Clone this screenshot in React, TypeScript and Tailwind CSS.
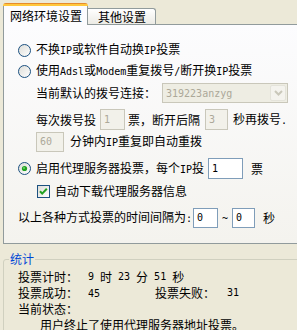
import React from "react";

// latin runs in half-width, like the old GB bitmap font
const M = ({ children }: { children: React.ReactNode }) => (
  <span className="font-['DejaVu_Sans_Mono',monospace] text-[10px]">{children}</span>
);

function Radio({ checked, id }: { checked?: boolean; id: string }) {
  return (
    <svg width="13" height="13" viewBox="0 0 13 13" className="shrink-0">
      <defs>
        <linearGradient id={id} x1="0" y1="0" x2="1" y2="1">
          <stop offset="0" stopColor="#DCDCD7" />
          <stop offset="1" stopColor="#FFFFFF" />
        </linearGradient>
      </defs>
      <circle cx="6.5" cy="6.5" r="6" fill={`url(#${id})`} stroke="#1C5180" strokeWidth="1" />
      {checked && <circle cx="6.5" cy="6.5" r="2.6" fill="#21A121" />}
      {checked && <circle cx="6" cy="6" r="1" fill="#6FD46B" />}
    </svg>
  );
}

function Checkbox() {
  return (
    <svg width="13" height="13" viewBox="0 0 13 13" className="shrink-0">
      <defs>
        <linearGradient id="cb" x1="0" y1="0" x2="1" y2="1">
          <stop offset="0" stopColor="#DCDCD7" />
          <stop offset="1" stopColor="#FFFFFF" />
        </linearGradient>
      </defs>
      <rect x="0.5" y="0.5" width="12" height="12" fill="url(#cb)" stroke="#1C5180" />
      <path d="M3 6.2 L5.2 8.6 L9.8 3.8" stroke="#21A121" strokeWidth="2" fill="none" />
    </svg>
  );
}

function Combo() {
  return (
    <div className="ml-[6px] flex h-[20px] w-[126px] shrink-0 items-center border border-[#C9C7BA] bg-[#EEEDE3]">
      <span className="pl-[3px] text-[#ACA899]">
        <M>319223anzyg</M>
      </span>
      <div className="ml-auto mr-px flex h-[16px] w-[16px] items-center justify-center rounded-[2px] border border-[#E4E3DA] bg-[#F4F3EE]">
        <svg width="9" height="6" viewBox="0 0 9 6">
          <path d="M1 1 L4.5 4.5 L8 1" stroke="#C9C7BA" strokeWidth="2" fill="none" />
        </svg>
      </div>
    </div>
  );
}

export default function App() {
  return (
    <div className="h-[330px] w-[297px] overflow-hidden whitespace-nowrap bg-[#ECE9D8] font-['Noto_Sans_CJK_SC',sans-serif] text-[12px] leading-[16px] text-black">
      {/* tabs */}
      <div className="flex h-[24px] items-end pl-[3px]">
        <div className="relative z-10 -mb-px flex h-[22px] w-[85px] flex-col overflow-hidden rounded-t-[3px]">
          <div className="h-px bg-[#E68B2C]" />
          <div className="h-[2px] bg-[#FFC73C]" />
          <div className="flex flex-1 items-center border-x border-[#919B9C] bg-[#FCFCFE] pl-[6px]">
            网络环境设置
          </div>
        </div>
        <div className="flex h-[16px] w-[68px] items-center rounded-tr-[3px] border-t border-r border-[#919B9C] bg-linear-to-b from-[#FFFFFF] to-[#ECEBE5] pl-[10px] pt-px">
          其他设置
        </div>
      </div>

      {/* panel */}
      <div className="ml-[3px] flex w-[296px] flex-col border border-[#919B9C] bg-linear-to-b from-[#FCFCFE] to-[#F4F3EE] pb-[15px] pl-[14px] pt-[15px]">
        <div className="flex h-[20px] items-center gap-[5px]">
          <Radio id="r1" />
          <span>
            不换<M>IP</M>或软件自动换<M>IP</M>投票
          </span>
        </div>
        <div className="mt-px flex h-[20px] items-center gap-[5px]">
          <Radio id="r2" />
          <span>
            使用<M>Adsl</M>或<M>Modem</M>重复拨号<M>/</M>断开换<M>IP</M>投票
          </span>
        </div>
        <div className="mt-[2px] flex h-[20px] items-center pl-[18px]">
          <span className="shrink-0">当前默认的拨号连接：</span>
          <Combo />
        </div>
        <div className="mt-[6px] flex h-[21px] items-center pl-[18px]">
          <span className="shrink-0">每次拨号投</span>
          <div className="ml-[4px] flex h-[21px] w-[25px] shrink-0 items-center border border-[#C9C7BA] bg-[#F2F1EA] pl-[3px] text-[#ACA899]">
            <M>1</M>
          </div>
          <span className="ml-[3px] shrink-0">票，断开后隔</span>
          <div className="ml-[5px] flex h-[21px] w-[23px] shrink-0 items-center border border-[#C9C7BA] bg-[#F2F1EA] pl-[3px] text-[#ACA899]">
            <M>3</M>
          </div>
          <span className="ml-[5px] shrink-0">
            秒再拨号<M>.</M>
          </span>
        </div>
        <div className="mt-[2px] flex h-[20px] items-center pl-[18px]">
          <div className="flex h-[20px] w-[28px] shrink-0 items-center border border-[#C9C7BA] bg-[#F2F1EA] pl-[3px] text-[#ACA899]">
            <M>60</M>
          </div>
          <span className="ml-[6px]">
            分钟内<M>IP</M>重复即自动重拨
          </span>
        </div>
        <div className="mt-[6px] flex h-[21px] items-center">
          <Radio id="r3" checked />
          <span className="ml-[5px] w-[168px] shrink-0">
            启用代理服务器投票，每个<M>IP</M>投
          </span>
          <div className="ml-[4px] flex h-[21px] w-[35px] shrink-0 items-center border border-[#7F9DB9] bg-white pl-[3px]">
            <M>1</M>
          </div>
          <span className="ml-[8px]">票</span>
        </div>
        <div className="mt-[2px] flex h-[20px] items-center pl-[19px]">
          <Checkbox />
          <span className="ml-[5px]">自动下载代理服务器信息</span>
        </div>
        <div className="mt-[7px] flex h-[20px] items-center">
          <span className="w-[175px] shrink-0">
            以上各种方式投票的时间间隔为<M>:</M>
          </span>
          <div className="flex h-[20px] w-[25px] shrink-0 items-center border border-[#7F9DB9] bg-white pl-[3px]">
            <M>0</M>
          </div>
          <span className="ml-[4px] w-[10px] shrink-0">
            <M>~</M>
          </span>
          <div className="flex h-[20px] w-[23px] shrink-0 items-center border border-[#7F9DB9] bg-white pl-[3px]">
            <M>0</M>
          </div>
          <span className="ml-[8px]">秒</span>
        </div>
      </div>

      {/* statistics */}
      <fieldset className="ml-[3px] mt-[7px] w-[300px] rounded-[3px] border border-[#D0D0BF]">
        <legend className="ml-[5px] px-px leading-[16px] text-[#0046D5]">统计</legend>
        <div className="flex flex-col pl-[14px] pt-[2px]">
          <div className="flex h-[16px] items-center">
            <span className="w-[70px] shrink-0">投票计时：</span>
            <span className="flex items-center gap-[6px]">
              <M>9</M>
              <span>时</span>
              <M>23</M>
              <span>分</span>
              <M>51</M>
              <span>秒</span>
            </span>
          </div>
          <div className="flex h-[16px] items-center">
            <span className="w-[70px] shrink-0">投票成功：</span>
            <span className="w-[67px] shrink-0">
              <M>45</M>
            </span>
            <span className="w-[72px] shrink-0">投票失败：</span>
            <M>31</M>
          </div>
          <div className="flex h-[16px] items-center">
            <span>当前状态：</span>
          </div>
          <div className="flex h-[16px] items-center pl-[22px]">
            <span>用户终止了使用代理服务器地址投票。</span>
          </div>
        </div>
      </fieldset>
    </div>
  );
}
